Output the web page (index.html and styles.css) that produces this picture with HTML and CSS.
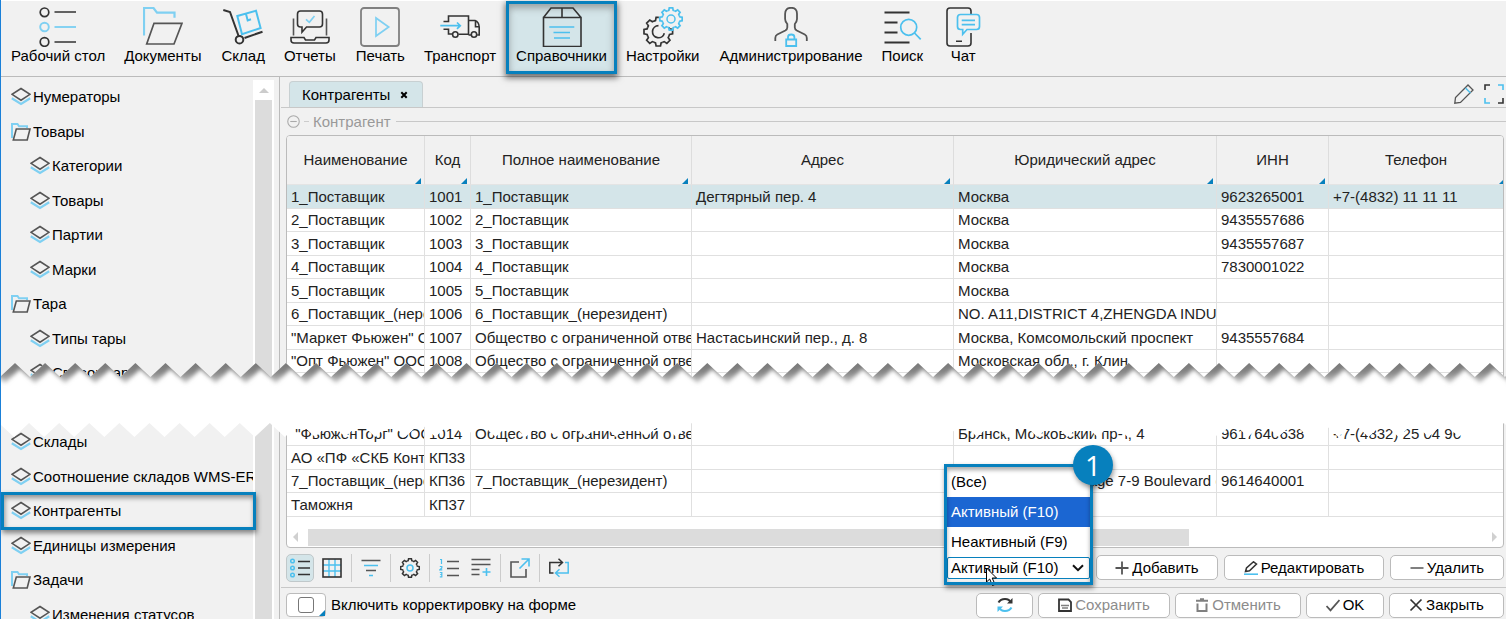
FILE: index.html
```html
<!DOCTYPE html>
<html lang="ru">
<head>
<meta charset="utf-8">
<title>Контрагенты</title>
<link rel="stylesheet" href="styles.css">
</head>
<body>
<svg class="defs" aria-hidden="true">
  <defs>
    <symbol id="layers" viewBox="0 0 20 20"><path class="k" stroke-width="1.600" d="M10 1.500 19 7.300 10 13.200 1 7.300z"/><path class="b" stroke-width="2.200" d="M.8 11.300 10 17l9.200-5.700"/></symbol>
    <symbol id="folder" viewBox="0 0 20 20"><path class="b" stroke-width="2" d="M1 16V2h5.500l1.500 2.200h8V6"/><path class="k" stroke-width="1.600" d="M5.300 7H19l-2.800 11H2.300z"/></symbol>
    <path id="tooth" d="M-4.400-10.600-2.800-11.200-2.200-14.300H2.200L2.800-11.200 4.400-10.600"/>
    <g id="gear7">
      <use href="#tooth"/><use href="#tooth" transform="rotate(90)"/><use href="#tooth" transform="rotate(135)"/><use href="#tooth" transform="rotate(180)"/><use href="#tooth" transform="rotate(225)"/><use href="#tooth" transform="rotate(270)"/><use href="#tooth" transform="rotate(315)"/>
    </g>
    <g id="gear6">
      <use href="#tooth" transform="rotate(90)"/><use href="#tooth" transform="rotate(135)"/><use href="#tooth" transform="rotate(180)"/><use href="#tooth" transform="rotate(225)"/><use href="#tooth" transform="rotate(270)"/><use href="#tooth" transform="rotate(315)"/>
      <path d="M-4.400-10.600-2.800-11.200-2.200-14.300H.5"/>
    </g>
    <g id="gear"><use href="#gear7"/><use href="#tooth" transform="rotate(45)"/></g>
  </defs>
</svg>

<header class="topbar">
  <button class="nav"><svg viewBox="0 0 40 40"><g class="d" stroke-width="1.700"><circle cx="6.500" cy="5.300" r="4.300"/><path d="M16.500 5H38M16.500 35H38"/><circle cx="6.500" cy="35" r="4.300"/></g><g class="b" stroke-width="1.900"><circle cx="6.500" cy="20" r="4.300"/><path d="M16.500 20H38"/></g></svg><span>Рабочий стол</span></button>
  <button class="nav"><svg viewBox="0 0 40 40"><path class="b" stroke-width="2.200" d="M1 28.500V1h9.500L14 5.700h17.500v5"/><path class="k" stroke-width="1.700" d="M11 16.300h28L31 37H3.700z"/></svg><span>Документы</span></button>
  <button class="nav"><svg viewBox="0 0 40 40"><path class="d" stroke-width="2" d="M.3 3 7 5l8.600 24M21.500 31l18-6.300"/><circle class="d" stroke-width="2" cx="16.500" cy="32.700" r="3.800"/><path class="c" stroke-width="2" d="M14.300 9 33 3.700 37.600 21 19 27.300zM23 7l1.700 6.500L28 12.300"/></svg><span>Склад</span></button>
  <button class="nav"><svg viewBox="0 0 40 40"><path class="d" stroke-width="1.600" d="M1 30.500h13l1.500 2.500h9l1.500-2.500h13V33q0 3-3 3H4q-3 0-3-3z"/><path class="k" stroke-width="1.600" d="M3.500 11.500v17M36.500 11.500v17"/><path class="d" stroke-width="1.600" d="M10.500 4h19q3 0 3 3v10q0 3-3 3H16.500l-4.500 5.200V20h-1.500q-3 0-3-3V7q0-3 3-3z"/><path class="b" stroke-width="1.700" d="m16 12.300 3.300 3L24.500 9"/></svg><span>Отчеты</span></button>
  <button class="nav"><svg viewBox="0 0 40 40"><rect class="g" stroke-width="1.800" x="1" y="1" width="38" height="38" rx="3"/><path class="b" stroke-width="1.700" d="M16 11v18l12.700-9z"/></svg><span>Печать</span></button>
  <button class="nav"><svg viewBox="0 0 40 40"><g class="d" stroke-width="1.600"><path d="M3.500 14.500H8.500V9h20v18.300H18.500M3.500 22.300H8.500V27h3.500M28.500 13.500H35q4 1.500 4.200 6.500v8h-2M31 28h-2.500M35.500 13.500v6.200H39"/><circle cx="15.300" cy="27.500" r="2.700"/><circle cx="34" cy="27.500" r="2.700"/></g><path class="c" stroke-width="1.700" d="M.3 18.700H20m-3-3.200 3.300 3.200-3.300 3.200"/></svg><span>Транспорт</span></button>
  <button class="nav current"><svg viewBox="0 0 40 40"><path class="d" stroke-width="1.600" d="M1.500 10.500h37.500v29H1.500zL9 1h22l8 9.500M20 1v9.500"/><path class="c" stroke-width="1.700" d="M7.300 20h25M11.500 25.500h16.500M12 31h16"/></svg><span>Справочники</span></button>
  <button class="nav"><svg viewBox="0 0 40 40"><use class="d" stroke-width="1.700" href="#gear6" transform="translate(15.300 24.700)"/><path class="d" stroke-width="1.700" d="M15.500 18.700a6 6 0 1 0 5.800 7.500"/><use class="c" stroke-width="2.200" href="#gear" transform="translate(28 12) scale(.78)"/><circle class="c" stroke-width="1.500" cx="28" cy="12" r="4"/></svg><span>Настройки</span></button>
  <button class="nav"><svg viewBox="0 0 40 40"><path class="k" stroke-width="1.800" d="M4.300 34v-3q0-2.500 2-3.500l8-4q2-1.200 2-3v-3.500q-2.200-2.500-2.200-5V7q0-6.200 6-6.200T26 7v5q0 2.500-2.200 5v3.500q0 1.800 2 3l8 4q2 1 2 3.500v3"/><path class="c" stroke-width="1.800" d="M15.200 32.500h10v6.500h-10zM17 32v-2q0-2.500 3.200-2.500t3.200 2.500v2"/></svg><span>Администрирование</span></button>
  <button class="nav"><svg viewBox="0 0 40 40"><path class="d" stroke-width="1.800" d="M2.500 5.500h25M2.500 15.500h13M2.500 25.500h13M2.500 35.500h25"/><path class="c" stroke-width="1.700" d="M32.500 26l6.200 6.300"/><circle class="c" stroke-width="1.700" cx="26.700" cy="20.300" r="8"/></svg><span>Поиск</span></button>
  <button class="nav"><svg viewBox="0 0 40 40"><path class="d" stroke-width="1.600" d="M28 7V4q0-3-3-3H7Q4 1 4 4v32q0 3 3 3h18q3 0 3-3V26M13 34.300h6"/><path class="c" stroke-width="1.700" d="M17.500 7.500h16q3 0 3 3v9q0 3-3 3H24l-4.300 4.800v-4.800h-2.200q-3 0-3-3v-9q0-3 3-3zM18.700 13.300H32M18.700 17.700H32"/></svg><span>Чат</span></button>
</header>

<main class="workspace">
  <nav class="sidebar">
    <ul class="tree">
      <li><svg><use href="#layers"/></svg><span>Нумераторы</span></li>
      <li><svg><use href="#folder"/></svg><span>Товары</span></li>
      <li class="child"><svg><use href="#layers"/></svg><span>Категории</span></li>
      <li class="child"><svg><use href="#layers"/></svg><span>Товары</span></li>
      <li class="child"><svg><use href="#layers"/></svg><span>Партии</span></li>
      <li class="child"><svg><use href="#layers"/></svg><span>Марки</span></li>
      <li><svg><use href="#folder"/></svg><span>Тара</span></li>
      <li class="child"><svg><use href="#layers"/></svg><span>Типы тары</span></li>
      <li class="child"><svg><use href="#layers"/></svg><span>Список тары</span></li>
      <li></li>
      <li><svg><use href="#layers"/></svg><span>Склады</span></li>
      <li><svg><use href="#layers"/></svg><span>Соотношение складов WMS-ERP</span></li>
      <li class="marked"><svg><use href="#layers"/></svg><span>Контрагенты</span></li>
      <li><svg><use href="#layers"/></svg><span>Единицы измерения</span></li>
      <li><svg><use href="#folder"/></svg><span>Задачи</span></li>
      <li class="child"><svg><use href="#layers"/></svg><span>Изменения статусов</span></li>
    </ul>
    <div class="vscroll"><i class="up"></i><i class="thumb"></i></div>
  </nav>

  <section class="content">
    <div class="tabs">
      <div class="tab"><span>Контрагенты</span><button class="tab-close" aria-label="Закрыть вкладку"><svg viewBox="0 0 8 8"><path d="M1.300 1.300l5.400 5.400M6.700 1.300 1.300 6.700"/></svg></button></div>
      <div class="tab-tools">
        <button aria-label="Настроить"><svg viewBox="0 0 20 20"><path class="k" stroke-width="1.300" d="M.8 19.200 1.500 13.500 14 1l5 5L6.500 18.500z"/><path class="c" stroke-width="1.500" d="M11.500 4l5 5"/></svg></button>
        <button aria-label="Во весь экран"><svg viewBox="0 0 20 20"><path class="d" stroke-width="1.600" d="M1 6V1h5M19 14v5h-5"/><path class="c" stroke-width="1.600" d="M14 1h5v5M6 19H1v-5"/></svg></button>
      </div>
    </div>
    <div class="group-title"><svg viewBox="0 0 12 12"><circle cx="6" cy="6" r="5.300"/><path d="M3 6h6"/></svg><i class="dash"></i><span>Контрагент</span><i class="line"></i></div>

    <div class="grid-box">
      <table class="grid">
        <colgroup><col class="c1"><col class="c2"><col class="c3"><col class="c4"><col class="c5"><col class="c6"><col></colgroup>
        <thead><tr><th>Наименование</th><th>Код</th><th>Полное наименование</th><th>Адрес</th><th>Юридический адрес</th><th>ИНН</th><th>Телефон</th></tr></thead>
        <tbody>
          <tr class="selected"><td>1_Поставщик</td><td>1001</td><td>1_Поставщик</td><td>Дегтярный пер. 4</td><td>Москва</td><td>9623265001</td><td>+7-(4832) 11 11 11</td></tr>
          <tr><td>2_Поставщик</td><td>1002</td><td>2_Поставщик</td><td></td><td>Москва</td><td>9435557686</td><td></td></tr>
          <tr><td>3_Поставщик</td><td>1003</td><td>3_Поставщик</td><td></td><td>Москва</td><td>9435557687</td><td></td></tr>
          <tr><td>4_Поставщик</td><td>1004</td><td>4_Поставщик</td><td></td><td>Москва</td><td>7830001022</td><td></td></tr>
          <tr><td>5_Поставщик</td><td>1005</td><td>5_Поставщик</td><td></td><td>Москва</td><td></td><td></td></tr>
          <tr><td>6_Поставщик_(нерезидент)</td><td>1006</td><td>6_Поставщик_(нерезидент)</td><td></td><td>NO. A11,DISTRICT 4,ZHENGDA INDUSTRY</td><td></td><td></td></tr>
          <tr><td>"Маркет Фьюжен" ООО</td><td>1007</td><td>Общество с ограниченной ответственностью</td><td>Настасьинский пер., д. 8</td><td>Москва, Комсомольский проспект</td><td>9435557684</td><td></td></tr>
          <tr><td>"Опт Фьюжен" ООО</td><td>1008</td><td>Общество с ограниченной ответственностью</td><td></td><td>Московская обл., г. Клин</td><td></td><td></td></tr>
          <tr class="gap"><td></td><td></td><td></td><td></td><td></td><td></td><td></td></tr>
          <tr><td>&nbsp;"ФьюженТорг" ООО</td><td>1014</td><td>Общество с ограниченной ответственностью</td><td></td><td>Брянск, Московский пр-т, 4</td><td>9617640638</td><td>+7-(4832) 25 04 96</td></tr>
          <tr><td>АО «ПФ «СКБ Контур»</td><td>КП33</td><td></td><td></td><td></td><td></td><td></td></tr>
          <tr><td>7_Поставщик_(нерезидент)</td><td>КП36</td><td>7_Поставщик_(нерезидент)</td><td></td><td>Cambridge, 123 Village 7-9 Boulevard of</td><td>9614640001</td><td></td></tr>
          <tr><td>Таможня</td><td>КП37</td><td></td><td></td><td></td><td></td><td></td></tr>
        </tbody>
      </table>
      <div class="hscroll"><i class="left"></i><div class="track"><i class="thumb"></i></div><i class="right"></i></div>
    </div>

    <div class="actions">
      <div class="tools">
        <button class="tool on" aria-label="Список"><svg viewBox="0 0 20 20"><g class="c" stroke-width="1.500"><circle cx="2.500" cy="3" r="1.800"/><circle cx="2.500" cy="10" r="1.800"/><circle cx="2.500" cy="17" r="1.800"/></g><path class="d" stroke-width="1.700" d="M8 3.500h12M8 10h12M8 16.500h12"/></svg></button>
        <button class="tool" aria-label="Таблица"><svg viewBox="0 0 20 20"><path class="c" stroke-width="1.400" d="M7 1v18M13 1v18M1 7h18M1 13h18"/><rect class="d" stroke-width="1.600" x="1" y="1" width="18" height="18"/></svg></button>
        <i class="sep"></i>
        <button class="tool" aria-label="Фильтр"><svg viewBox="0 0 20 20"><path class="k" stroke-width="1.600" d="M.5 2.500h19M5 12.500h10"/><path class="c" stroke-width="1.600" d="M3 7.500h14M8 17.500h4"/></svg></button>
        <i class="sep"></i>
        <button class="tool" aria-label="Настройки"><svg viewBox="0 0 20 20"><use class="d" stroke-width="2.300" href="#gear" transform="translate(10 10) scale(.65)"/><circle class="c" stroke-width="1.500" cx="10" cy="10" r="3"/></svg></button>
        <i class="sep"></i>
        <button class="tool" aria-label="Нумерация"><svg viewBox="0 0 20 20"><path class="c" stroke-width="1.200" d="M1 1.500h1.500V6M.8 8.500h2V10l-2 1.800h2.500M.8 14.500h2v4.300h-2M1.200 16.500h1.600"/><path class="k" stroke-width="1.600" d="M8 3.500h12M8 10.500h12M8 17.500h12"/></svg></button>
        <button class="tool" aria-label="Итоги"><svg viewBox="0 0 20 20"><path class="k" stroke-width="1.600" d="M.5 1.500h19M.5 6.500h19M.5 11.500h8M.5 16.500h8"/><path class="c" stroke-width="1.600" d="M15.500 10v8M11.500 14h8"/></svg></button>
        <i class="sep"></i>
        <button class="tool" aria-label="Экспорт"><svg viewBox="0 0 20 20"><path class="k" stroke-width="1.600" d="M9 4H1v15h15v-8"/><path class="c" stroke-width="1.600" d="M11.500 1H19v7.500M19 1 9.500 10.500"/></svg></button>
        <i class="sep"></i>
        <button class="tool" aria-label="Обмен"><svg viewBox="0 0 20 20"><path class="d" stroke-width="1.500" d="M4.500 15H.8V4.500H13M9.500.8l4 3.700-4 3.700"/><path class="c" stroke-width="1.500" d="M16 4.500h3.200V15H7M10.500 11.300l-4 3.700 4 3.700"/></svg></button>
      </div>
      <div class="filter">
        <ul class="options"><li>(Все)</li><li class="hover">Активный (F10)</li><li>Неактивный (F9)</li></ul>
        <select aria-label="Фильтр по активности"><option>(Все)</option><option selected>Активный (F10)</option><option>Неактивный (F9)</option></select>
        <svg class="chevron" viewBox="0 0 12 8"><path d="M1 1.200l5 5 5-5"/></svg>
        <svg class="cursor" viewBox="0 0 14 20"><path d="M1.500 1v14l3.200-3 2.800 6.500 2.500-1.100L7.200 11H11.500z"/></svg>
        <div class="frame"></div>
        <b class="callout">1</b>
      </div>
      <button class="btn add"><svg viewBox="0 0 14 14"><path class="k" stroke-width="1.800" d="M7 .5v13M.5 7h13"/></svg>Добавить</button>
      <button class="btn edit"><svg viewBox="0 0 14 14"><path class="d" stroke-width="1.500" d="M1.500 10.500 2.500 7 9.500.8l3 2.200-7 6.700z"/><path class="c" stroke-width="1.600" d="M0 13.200h14"/></svg>Редактировать</button>
      <button class="btn del"><svg viewBox="0 0 14 14"><path class="g" stroke-width="2" d="M.5 7h13"/></svg>Удалить</button>
    </div>

    <footer class="bottom">
      <label class="check"><span class="check-box"><input type="checkbox"></span>Включить корректировку на форме</label>
      <button class="btn refresh" aria-label="Обновить"><svg viewBox="0 0 16 16"><path class="d" stroke-width="2" d="M1.500 5.500Q3.500 2 8 2t5.500 3.500"/><path class="fd" d="M15.500 1v5.500H10z"/><path class="c" stroke-width="2" d="M14.500 10.500Q12.500 14 8 14t-5.500-3.500"/><path class="fc" d="M.5 15V9.500H6z"/></svg></button>
      <button class="btn save" disabled><svg viewBox="0 0 14 14"><path class="d" stroke-width="1.800" d="M1 1.500h9.500L13 4v9H1z"/><path class="g" stroke-width="1.400" d="M3 7.500h8M4 10h6"/></svg>Сохранить</button>
      <button class="btn cancel" disabled><svg viewBox="0 0 14 14"><path class="g" stroke-width="2" d="M1 2.800h12M5 1.200h4M2.500 5.500V13h9V5.500"/></svg>Отменить</button>
      <button class="btn ok"><svg viewBox="0 0 14 14"><path class="k" stroke-width="1.800" d="M.5 8l4 4.300L13.500 2"/></svg>OK</button>
      <button class="btn close"><svg viewBox="0 0 14 14"><path class="d" stroke-width="1.700" d="M1.500 1.500l11 11M12.500 1.500l-11 11"/></svg>Закрыть</button>
    </footer>
  </section>
</main>

<svg class="tear" aria-hidden="true">
  <defs>
    <clipPath id="band-clip"><path id="band"/></clipPath>
    <filter id="soft" x="-5%" y="-50%" width="110%" height="200%"><feGaussianBlur stdDeviation="2"/></filter>
    <linearGradient id="fade" gradientUnits="userSpaceOnUse" x1="0" y1="0" x2="0" y2="16"><stop offset="0" stop-color="#7c7c7c"/><stop offset=".4" stop-color="#858585"/><stop offset="1" stop-color="#c4c4c4"/></linearGradient>
  </defs>
  <g clip-path="url(#band-clip)"><rect width="100%" height="100%" fill="#fff"/><path id="shade" fill="url(#fade)" filter="url(#soft)"/></g>
</svg>
<script src="tear.js"></script>
</body>
</html>
```
FILE: styles.css
```css
* { box-sizing: border-box; }
body {
  margin: 0;
  height: 100vh;
  overflow: hidden;
  position: relative;
  display: flex;
  flex-direction: column;
  border-left: 1px solid #1a80d8;
  background: #f1f1f1;
  color: #000;
  font: 15px/20px "Liberation Sans", Arial, sans-serif;
}
button, select, input { font: inherit; color: inherit; margin: 0; }
button { border: 0; background: none; padding: 0; }
ul { list-style: none; margin: 0; padding: 0; }
svg { display: block; flex: none; }
.defs { position: absolute; width: 0; height: 0; }
.d, .k, .g, .b, .c { fill: none; }
.d { stroke: #333; }
.k { stroke: #555; }
.g { stroke: #808080; }
.b { stroke: #7fd0f2; }
.c { stroke: #4cc0ee; }
.fd { fill: #333; }
.fc { fill: #4cc0ee; }

/* top navigation */
.topbar {
  display: flex;
  flex: none;
  height: 77px;
  border-top: 1px solid #fff;
  border-bottom: 1px solid #bbb;
}
.nav {
  display: flex;
  flex-direction: column;
  align-items: center;
  min-width: 60px;
  height: 73px;
  padding: 6px 10px 0;
  white-space: nowrap;
}
.nav:nth-child(even) { padding-left: 9px; }
.nav svg { width: 40px; height: 40px; }
.nav span { line-height: 18px; }
.nav.current {
  position: relative;
  background: #d4e5e9;
  box-shadow: inset 0 0 0 3px #0780bd, inset 0 4px 7px 3px #6668, 0 3px 6px 1px #0008;
}

.workspace { display: flex; flex: 1; min-height: 0; }

/* directory tree */
.sidebar { display: flex; flex: none; width: 279px; border-right: 1px solid #bbb; padding-top: 3px; overflow: hidden; }
.tree { width: 252px; }
.tree li { display: flex; align-items: center; gap: 2px; height: 34px; padding-left: 10px; position: relative; }
.tree li:nth-child(even) { height: 35px; }
.tree .child { padding-left: 29px; }
.tree svg { width: 20px; height: 20px; }
.tree span { overflow: hidden; white-space: nowrap; }
.marked::after {
  content: "";
  position: absolute;
  inset: -2px -3px -2px 0;
  border: 3px solid #0780bd;
  box-shadow: 1px 3px 5px #0007, inset 1px 3px 5px #0006;
  z-index: 1;
}
.vscroll { width: 21px; background: #fff; display: flex; flex-direction: column; padding: 0 2px; }
.vscroll .up { height: 20px; display: flex; align-items: center; justify-content: center; }
.vscroll .up::before { content: ""; border: 5px solid transparent; border-top: 0; border-bottom-color: #ccc; }
.vscroll .thumb { flex: 1; background: #dcdcdc; }

/* tabs */
.content { flex: 1; min-width: 0; display: flex; flex-direction: column; padding-left: 1px; }
.tabs { display: flex; justify-content: space-between; height: 31px; border-bottom: 1px solid #c8c8c8; padding: 4px 2px 0 8px; flex: none; }
.tab { display: flex; align-items: center; gap: 10px; padding: 0 14px 0 12px; background: #d4e5e9; border: 1px solid #c8d0d2; border-bottom: 0; border-radius: 4px 4px 0 0; }
.tab-close svg { width: 8px; height: 8px; }
.tab-close path { stroke: #000; stroke-width: 2; }
.tab-tools { display: flex; gap: 10px; align-items: center; }
.tab-tools svg { width: 20px; height: 20px; }

.group-title { display: flex; align-items: center; height: 27px; padding-left: 6px; color: #999; flex: none; }
.group-title svg { width: 13px; height: 13px; fill: none; stroke: #aaa; }
.group-title .dash { width: 5px; height: 1px; background: #ccc; margin: 0 4px; }
.group-title .line { flex: 1; height: 1px; background: #c8c8c8; margin-left: 5px; }

/* table */
.grid-box {
  flex: 1;
  min-height: 0;
  display: flex;
  flex-direction: column;
  justify-content: space-between;
  margin: 0 2px 0 5px;
  border: 1px solid #bbb;
  border-radius: 4px;
  background: #fff;
  overflow: hidden;
}
.grid { width: 100%; table-layout: fixed; border-collapse: separate; border-spacing: 0; color: #222; }
.c1 { width: 138px; }
.c2 { width: 46px; }
.c3 { width: 221px; }
.c4 { width: 262px; }
.c5 { width: 263px; }
.c6 { width: 112px; }
.grid th { position: relative; height: 49px; padding: 0; font-weight: normal; background: #f1f1f1; border-right: 1px solid #ddd; border-bottom: 1px solid #e4e4e4; }
.grid th::after { content: ""; position: absolute; right: 3px; bottom: 0; border: 3px solid transparent; border-right-color: #0780bd; border-bottom-color: #0780bd; }
.grid td { height: 23px; padding: 0 0 0 4px; line-height: 20px; white-space: nowrap; overflow: hidden; border-right: 1px solid #e0e0e0; border-bottom: 1px solid #e0e0e0; }
.grid tr > :last-child { border-right: 0; }
.grid th:last-child::after { right: -2px; }
.grid tr:nth-child(odd) td { height: 24px; }
.grid tr.gap:nth-child(odd) td { height: 50px; }
.grid .selected td { background: #d4e5e9; }
.hscroll { display: flex; align-items: center; height: 20px; padding: 0 6px; }
.hscroll .track { flex: 1; margin: 0 10px; }
.hscroll .thumb { display: block; width: 75%; height: 17px; background: #dcdcdc; }
.hscroll .left { border: 5px solid transparent; border-left: 0; border-right-color: #d0d0d0; }
.hscroll .right { border: 5px solid transparent; border-right: 0; border-left-color: #d0d0d0; }

/* actions under the table */
.actions { display: flex; flex: none; align-items: center; gap: 6px; height: 40px; padding: 0 2px 0 5px; border-bottom: 1px solid #c8c8c8; }
.tools { display: flex; align-items: center; gap: 4px; flex: 1; }
.tool { width: 28px; height: 28px; display: flex; align-items: center; justify-content: center; border-radius: 5px; }
.tool svg { width: 20px; height: 20px; }
.tool.on { background: #d4e5e9; border: 1px solid #c0c8ca; }
.sep { width: 1px; height: 28px; margin: 0 1px; background: #ccc; }

.btn {
  display: flex;
  align-items: center;
  justify-content: center;
  gap: 3px;
  height: 25px;
  border: 1px solid #bbb;
  border-radius: 5px;
  background: #fff;
  white-space: nowrap;
}
.btn svg { width: 14px; height: 14px; }
.btn:disabled { color: #8c8c8c; }
.add { width: 122px; }
.edit { width: 160px; }
.del { width: 114px; }

.filter { position: relative; width: 143px; }
.filter select { display: block; width: 100%; height: 22px; padding: 0 0 0 3px; border: 1px solid #0780bd; border-radius: 2px; background: #fff; appearance: none; }
.options { position: absolute; left: 0; right: 0; bottom: 22px; background: #fff; }
.options li { height: 30px; line-height: 30px; padding-left: 4px; }
.options .hover { background: #1b66d2; color: #fff; }
.chevron { position: absolute; right: 6px; top: 7px; width: 12px; height: 8px; fill: none; stroke: #111; stroke-width: 2; }
.frame { position: absolute; inset: -93px -3px -6px; border: 3px solid #0780bd; box-shadow: 1px 3px 5px #0007, inset 0 3px 4px #0005; pointer-events: none; }
.cursor { position: absolute; left: 38px; top: 10px; width: 14px; height: 20px; fill: #fff; stroke: #000; }
.callout {
  position: absolute;
  right: -23px;
  top: -112px;
  width: 40px;
  height: 40px;
  border-radius: 50%;
  background: #0780bd;
  box-shadow: 1px 3px 5px #0006;
  color: #fff;
  text-align: center;
  font: 28px/40px "Open Sans", sans-serif;
}

/* form footer */
.bottom { display: flex; flex: none; align-items: center; gap: 5px; height: 31px; padding: 3px 2px 0 5px; }
.check { display: flex; align-items: center; gap: 5px; flex: 1; }
.check-box { position: relative; width: 40px; height: 24px; display: flex; align-items: center; justify-content: center; background: #fff; border: 1px solid #bbb; border-radius: 4px; }
.check-box::after { content: ""; position: absolute; right: 0; bottom: 0; border: 3px solid transparent; border-right-color: #0780bd; border-bottom-color: #0780bd; }
.check input { appearance: none; width: 16px; height: 16px; border: 1px solid #777; border-radius: 3px; background: #fff; }
.refresh { width: 57px; }
.refresh svg { width: 16px; height: 16px; }
.save { width: 132px; }
.cancel { width: 126px; }
.ok { width: 78px; }
.close { width: 115px; }

/* torn strip across the screen */
.tear { position: absolute; left: -1px; top: 360px; width: calc(100% + 1px); height: 80px; pointer-events: none; z-index: 2; }
```
FILE: tear.js
```js
// Builds the zigzag edges of the torn strip for the current window width.
const PITCH = 30.1;

function zigzag(width, top, depth) {
  let d = `M${15 - 2 * PITCH} ${top}`;
  for (let x = 15 - 2 * PITCH; x < width + PITCH; x += PITCH) {
    d += `L${x + PITCH / 2} ${top + depth}L${x + PITCH} ${top}`;
  }
  return d;
}

function drawTear() {
  const width = document.documentElement.clientWidth;
  const upper = zigzag(width, 3, 14);
  let lower = "";
  for (let n = Math.ceil(width / PITCH) + 1; n > -2; n--) {
    const x = 14 + n * PITCH;
    lower += `L${x} 77L${x - PITCH / 2} 63`;
  }
  document.getElementById("band").setAttribute("d", upper + lower + "Z");
  const shade = document.getElementById("shade");
  shade.setAttribute("d", upper + "V-20H-60Z");
  shade.setAttribute("transform", "translate(5 6)");
}

drawTear();
window.addEventListener("resize", drawTear);
```
